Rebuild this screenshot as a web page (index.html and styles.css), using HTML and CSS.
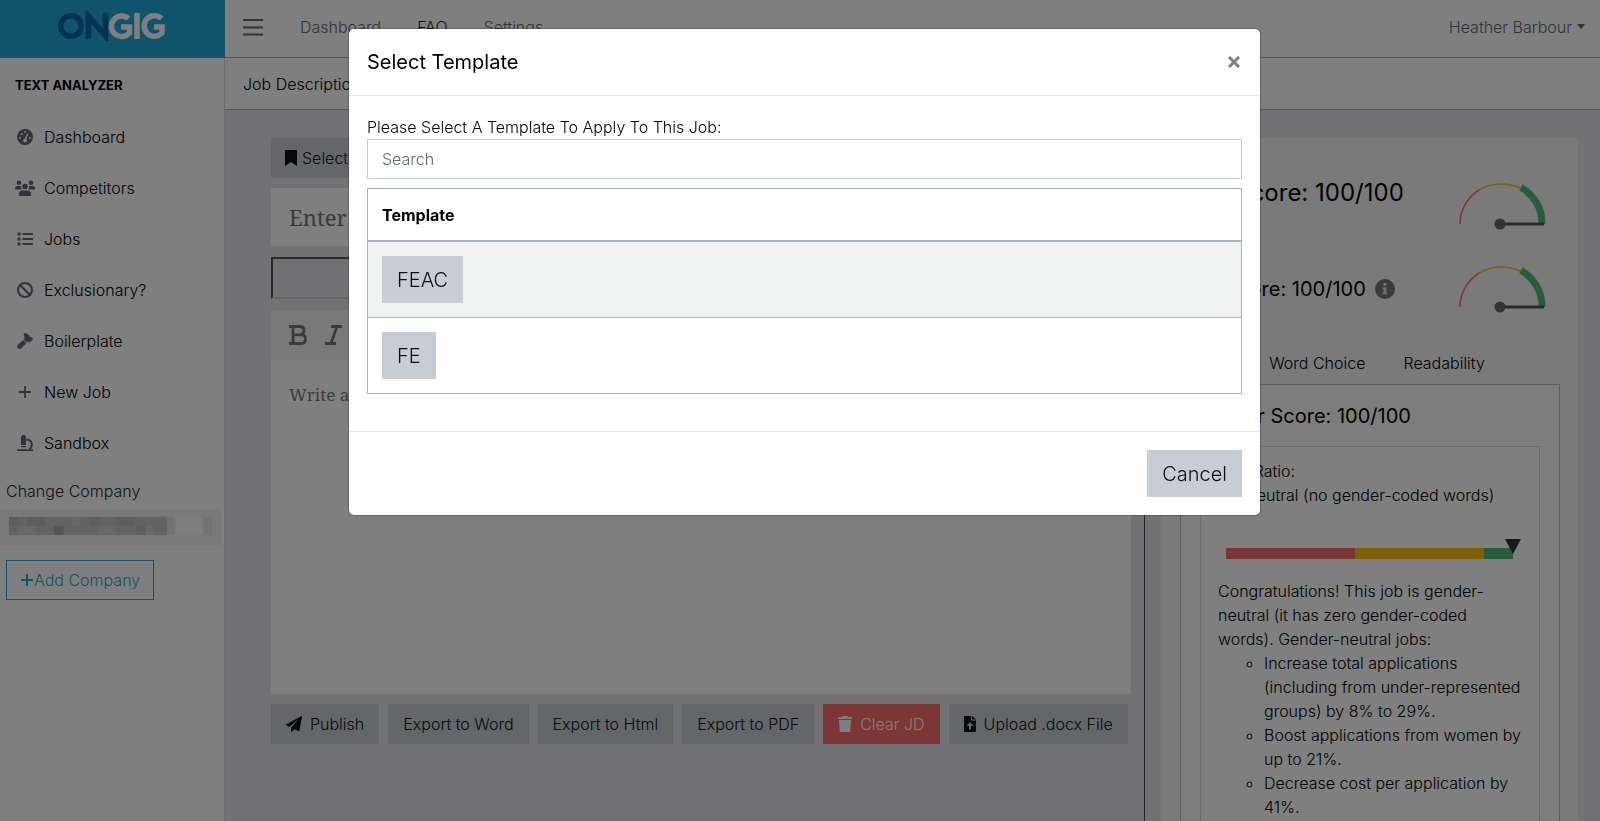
FILE: index.html
```html
<!DOCTYPE html>
<html lang="en">
<head>
<meta charset="utf-8">
<title>Ongig Text Analyzer</title>
<link rel="stylesheet" href="styles.css">
</head>
<body>
<div class="app">
  <aside class="sidebar">
    <div class="brand">
      <svg class="logo" width="108" height="30" viewBox="0 0 108 30" role="img" aria-label="Ongig">
        <g fill="none" stroke-width="5.5">
          <g stroke="#0064a8"><circle cx="13" cy="15" r="10.3"/><path d="M30.500 28V5L47.500 25V2"/></g>
          <g stroke="#fff"><path d="M70.500 7.500A10.300 10.300 0 1 0 71.500 22V16H63"/><path d="M79 2V28"/><path d="M103.500 7.500A10.300 10.300 0 1 0 104 22V16H96"/></g>
        </g>
      </svg>
    </div>
    <h2 class="side-title">TEXT ANALYZER</h2>
    <nav class="side-nav">
      <a href="#"><svg viewBox="0 0 16 16"><circle cx="8" cy="8" r="8"/><g fill="#fff"><circle cx="3.200" cy="9" r="1"/><circle cx="4.600" cy="5" r="1"/><circle cx="8" cy="3" r="1"/><circle cx="12.800" cy="9" r="1"/><circle cx="8" cy="11.500" r="1.900"/></g><path d="M8 11.500L10.700 4.500" stroke="#fff" stroke-width="1.300"/></svg>Dashboard</a>
      <a href="#"><svg class="wide" viewBox="0 0 20 16"><circle cx="4" cy="2.800" r="2.300"/><circle cx="16" cy="2.800" r="2.300"/><circle cx="10" cy="6.500" r="2.800"/><path d="M0 9.500V8.500Q0 6 2.500 6H5.500L6 6.300Q5.500 8.200 6.800 9.500ZM20 9.500V8.500Q20 6 17.500 6H14.500L14 6.300Q14.500 8.200 13.200 9.500ZM4 16V14Q4 10.500 7.500 10.500H12.500Q16 10.500 16 14V16Z"/></svg>Competitors</a>
      <a href="#"><svg viewBox="0 0 16 16"><path d="M.5 1.500h3v3h-3zM.5 6.500h3v3h-3zM.5 11.500h3v3h-3zM5.500 2h10.500v2H5.500zM5.500 7h10.500v2H5.500zM5.500 12h10.500v2H5.500z"/></svg>Jobs</a>
      <a href="#"><svg viewBox="0 0 16 16"><g fill="none" stroke="#5c6873" stroke-width="2"><circle cx="8" cy="8" r="7"/><path d="M3 3L13 13"/></g></svg>Exclusionary?</a>
      <a href="#"><svg viewBox="0 0 16 16"><path d="M6.500 .5L8.500 0L12.500 2.500L13 4.300L14.300 4L16 6L12.800 9.800L11 8.300L9.800 9.800L6.400 6.600L7.800 5.200ZM6 7.200L9.200 10.200L4 15.500Q2 16.600.7 15.300Q-.5 14 .6 12Z"/></svg>Boilerplate</a>
      <a href="#"><svg viewBox="0 0 16 16"><path d="M7.100 2h1.800v5.100H14v1.800H8.900V14H7.100V8.900H2V7.100h5.100z"/></svg>New Job</a>
      <a href="#"><svg viewBox="0 0 16 16"><path d="M5 1V0h3v1h1v8.500Q9 10 8.500 10H4.500Q4 10 4 9.500V1ZM4 11h5v1.300H4zM0 14.300h16V16H0z"/><path d="M9.500 4.500Q14.800 5 14.800 9.800Q14.800 13 12 14.800" fill="none" stroke="#5c6873" stroke-width="1.900"/></svg>Sandbox</a>
    </nav>
    <p class="side-label">Change Company</p>
    <svg class="mosaic" viewBox="0 0 225 42" preserveAspectRatio="none" role="img" aria-label="Company name hidden">
      <path fill="#f3f3f3" d="M0 0H222V36H0Z"/><path fill="#c6c6c6" d="M9 8H173V26H9Z"/>
      <path fill="#bababa" d="M9 8h9v9H9zM27 8h18v9H27zM90 8h9v9h-9zM117 8h18v9h-18zM137 17h9v9h-9z"/>
      <path fill="#a8a8a8" d="M54 17h10v9H54z"/><path fill="#d0d0d0" d="M72 8h9v9h-9zM99 17h18v9H99zM146 17h9v9h-9zM18 17h18v9H18z"/>
      <path fill="#e6e6e6" d="M168 8h8v18h-8zM204 8h9v18h-9z"/><path fill="#fafafa" d="M176 8h28v18h-28z"/><path fill="#fff" d="M0 36h218v6H0z"/>
    </svg>
    <button class="add-btn" type="button"><svg width="14" height="14" viewBox="0 0 14 14"><path d="M6 1h2v5h5v2H8v5H6V8H1V6h5z"/></svg>Add Company</button>
  </aside>

  <div class="main">
    <header class="topbar">
      <button class="burger" type="button" aria-label="Toggle menu"><svg width="22" height="18" viewBox="0 0 22 18"><path d="M1 2h20M1 9.500h20M1 16.500h20" stroke="#5c6873" stroke-width="2"/></svg></button>
      <nav class="top-nav"><a href="#">Dashboard</a><a href="#" class="active">FAQ</a><a href="#">Settings</a></nav>
      <button class="user" type="button">Heather Barbour<span class="caret"></span></button>
    </header>
    <div class="crumb">Job Description</div>
    <div class="content">
      <section class="editor">
        <div><button class="btn tight" type="button"><svg width="12" height="16" viewBox="0 0 12 16"><path d="M0 0H12V16L6 12L0 16Z"/></svg>Select Template</button></div>
        <input class="job-title" type="text" placeholder="Enter Title" aria-label="Job title">
        <div class="drop"></div>
        <div class="paper">
          <div class="tools">
            <button type="button" aria-label="Bold"><svg width="18" height="20" viewBox="0 0 18 20"><path d="M0 1.500H11Q15 1.500 15 5.500T11 9.800H4M4 1.500V18.500M0 18.500H12Q16.500 18.500 16.500 14T12 9.800"/></svg></button>
            <button type="button" aria-label="Italic"><svg width="18" height="20" viewBox="0 0 18 20"><path d="M6 1.500H17M0 18.500H11M12 1.500L6 18.500"/></svg></button>
          </div>
          <textarea class="doc" placeholder="Write a job description" aria-label="Job description"></textarea>
        </div>
        <div class="actions">
          <button class="btn" type="button"><svg width="16" height="16" viewBox="0 0 16 16"><path d="M15.500 0Q16 0 16 .8L13.500 14.500Q13.200 15.300 12.300 15L8.300 13.200L6.200 15.700Q5 16.300 5 15V11.800L12.500 3L3.500 10.800L.5 9.500Q-.5 8.800.5 8.200Z"/></svg>Publish</button>
          <button class="btn" type="button">Export to Word</button>
          <button class="btn" type="button">Export to Html</button>
          <button class="btn" type="button">Export to PDF</button>
          <button class="btn danger" type="button"><svg width="14" height="16" viewBox="0 0 14 16"><path d="M4.500 0h5l.7 1H14v2H0V1h3.800zM1 4h12l-.7 11Q12.200 16 11.200 16H2.800Q1.800 16 1.700 15z"/></svg>Clear JD</button>
          <button class="btn" type="button"><svg width="12" height="16" viewBox="0 0 12 16"><path fill-rule="evenodd" d="M1 0H7V4.500H12V15Q12 16 11 16H1Q0 16 0 15V1Q0 0 1 0ZM8 0L12 3.500H8ZM6 6L2.500 10H5V13.500H7V10H9.500Z"/></svg>Upload .docx File</button>
        </div>
      </section>
      <aside class="scores">
        <div class="score-row big"><h3>Text Score: 100/100</h3>
          <svg width="90" height="50" viewBox="0 0 90 50"><g fill="none"><path d="M2 43A43 41 0 0 1 21 9" stroke="#f86c6b" stroke-width="1.500"/><path d="M21 9A43 41 0 0 1 64 8" stroke="#ffc107" stroke-width="1.500"/><path d="M63 6.500A41 41 0 0 1 84 43" stroke="#4dbd74" stroke-width="7"/><path d="M42 43H86" stroke="#555" stroke-width="3"/></g><circle cx="42" cy="43" r="5.500" fill="#666"/></svg></div>
        <div class="score-row"><h4>Bias Score: 100/100 <svg class="info" width="20" height="20" viewBox="0 0 20 20"><circle cx="10" cy="10" r="10" fill="#777"/><path d="M8.500 4h3v3h-3zM7.500 8.200h4v5.300h1v1.800h-5v-1.800h1V10h-1z" fill="#ddd"/></svg></h4>
          <svg width="90" height="50" viewBox="0 0 90 50"><g fill="none"><path d="M2 43A43 41 0 0 1 21 9" stroke="#f86c6b" stroke-width="1.500"/><path d="M21 9A43 41 0 0 1 64 8" stroke="#ffc107" stroke-width="1.500"/><path d="M63 6.500A41 41 0 0 1 84 43" stroke="#4dbd74" stroke-width="7"/><path d="M42 43H86" stroke="#555" stroke-width="3"/></g><circle cx="42" cy="43" r="5.500" fill="#666"/></svg></div>
        <nav class="tabs"><a href="#">Bias</a><a href="#">Word Choice</a><a href="#">Readability</a></nav>
        <div class="tab-pane">
          <h4>Gender Score: 100/100</h4>
          <div class="detail">
            <p>Bias Ratio:<br>It's Neutral (no gender-coded words)</p>
            <div class="meter"><span class="low"></span><span class="mid"></span><span class="high"></span><i class="marker"></i></div>
            <p>Congratulations! This job is gender-neutral (it has zero gender-coded words). Gender-neutral jobs:</p>
            <ul><li>Increase total applications (including from under-represented groups) by 8% to 29%.</li><li>Boost applications from women by up to 21%.</li><li>Decrease cost per application by 41%.</li></ul>
          </div>
        </div>
      </aside>
    </div>
  </div>
</div>

<div class="backdrop">
  <div class="modal" role="dialog" aria-modal="true" aria-labelledby="modal-title">
    <div class="modal-head"><h1 id="modal-title">Select Template</h1><button class="close" type="button" aria-label="Close"><svg width="12" height="12" viewBox="0 0 12 12"><path d="M1 1L11 11M11 1L1 11" stroke="#7f7f7f" stroke-width="3"/></svg></button></div>
    <div class="modal-body">
      <label for="search">Please Select A Template To Apply To This Job:</label>
      <input id="search" type="text" placeholder="Search">
      <table>
        <thead><tr><th>Template</th></tr></thead>
        <tbody><tr><td><button class="btn-lg" type="button">FEAC</button></td></tr><tr><td><button class="btn-lg" type="button">FE</button></td></tr></tbody>
      </table>
    </div>
    <div class="modal-foot"><button class="btn-lg" type="button">Cancel</button></div>
  </div>
</div>
</body>
</html>
```
FILE: styles.css
```css
* { box-sizing: border-box; }
body { margin: 0; font: 300 16px/24px Inter, "Liberation Sans", sans-serif; color: #000; height: 100vh; overflow: hidden; }
h1, h2, h3, h4, p, ul { margin: 0; }
a { color: inherit; text-decoration: none; }
button, input, textarea { font: inherit; color: inherit; }
button { cursor: pointer; }
svg { flex: none; }
.app { display: flex; height: 100vh; overflow: hidden; background: #e4e5e9; }

.sidebar { flex: 0 0 225px; background: #fff; border-right: 1px solid #d5d8dd; }
.brand { height: 58px; margin-right: -1px; padding: 0 2px 6px 0; background: #20a8d8; display: flex; align-items: center; justify-content: center; }
.side-title { padding: 15px; font-size: 13px; line-height: 24px; font-weight: 700; }
.side-nav a { display: flex; align-items: center; gap: 11px; height: 51px; padding-left: 17px; }
.side-nav { margin-top: -1px; }
.side-nav svg { width: 16px; height: 16px; fill: #5c6873; }
.side-nav svg.wide { width: 20px; margin: 0 -2px; }
.side-label { padding: 11px 6px 6px; color: #23282c; }
.mosaic { display: block; width: 100%; height: 42px; }
.add-btn { display: flex; align-items: center; margin: 9px 6px; height: 40px; padding: 0 13px; border: 1px solid #20a8d8; background: none; color: #20a8d8; }
.add-btn svg { fill: #20a8d8; }

.main { flex: 1; min-width: 0; display: flex; flex-direction: column; }
.topbar { flex: none; height: 58px; background: #fff; border-bottom: 1px solid #a9b2b8; display: flex; align-items: center; color: #5c6873; padding: 0 15px 4px 17px; }
.burger, .user { border: 0; background: none; padding: 0; display: flex; align-items: center; }
.top-nav { display: flex; gap: 36px; margin-left: 36px; flex: 1; }
.top-nav .active { color: #23282c; }
.caret { border: 4px solid transparent; border-top: 5px solid; border-bottom: 0; margin-left: 5px; }
.crumb { flex: none; height: 52px; padding: 14px 18px; background: #fff; border-bottom: 1px solid #a9b2b8; }
.content { flex: 1; min-height: 0; display: flex; padding: 28px 22px 0 46px; }
.editor { flex: 1; min-width: 0; padding-right: 13px; border-right: 1px solid #444; margin-top: -28px; padding-top: 28px; }
.btn { display: inline-flex; align-items: center; gap: 8px; height: 40px; padding: 0 15px; border: 0; background: #c8ced3; color: #0b0e14; }
.btn svg { fill: currentColor; }
.tight { gap: 5px; padding: 0 14px; }
.danger { background: #f86c6b; color: #fff; }
.job-title { display: block; width: 100%; height: 58px; margin-top: 10px; padding: 0 18px; border: 0; background: #fff; font: 22px "Noto Serif", "Liberation Serif", serif; }
.job-title::placeholder, .doc::placeholder { color: #777; opacity: 1; }
.drop { height: 42px; margin: 11px 0; border: 2px solid #555; border-right-color: #ccc; border-bottom-color: #ccc; }
.paper { background: #fff; }
.tools { display: flex; gap: 18px; height: 50px; padding: 0 18px; align-items: center; background: #f3f3f3; }
.tools button { border: 0; padding: 0; background: none; display: flex; }
.tools path { fill: none; stroke: #777; stroke-width: 2.8px; }
.doc { display: block; width: 100%; height: 334px; padding: 22px 18px; border: 0; background: none; resize: none; font: 17px/26px "Noto Serif", "Liberation Serif", serif; }
.actions { display: flex; gap: 9px; padding-top: 10px; white-space: nowrap; }

.scores { flex: 0 0 417px; margin-left: 16px; background: #f4f4f5; padding: 0 18px 0 19px; }
.score-row { display: flex; justify-content: space-between; align-items: center; height: 83px; padding-right: 12px; }
.score-row h3 { font-size: 24px; font-weight: 400; }
h4 { font-size: 20px; font-weight: 400; }
.score-row.big { height: 88px; padding-top: 22px; align-items: flex-start; margin-top: 21px; }
.info { vertical-align: -3px; margin-left: 4px; }
.tabs { display: flex; gap: 38px; height: 54px; padding: 21px 0 0 20px; }
.tab-pane { border: 1px solid #b5b9be; padding: 19px 19px 19px 14px; background: #fafafa; }
.detail { margin: 18px 0 0 5px; padding: 12px 14px 12px 17px; border: 1px solid #d5d8dd; background: #fff; }
.meter { display: flex; height: 11px; margin: 41px 12px 20px 8px; position: relative; }
.low, .mid { flex: 9; background: #f86c6b; }
.mid { background: #ffc107; }
.high { flex: 2; background: #4dbd74; }
.marker { position: absolute; right: -8px; top: -9px; border: 8px solid transparent; border-top: 15px solid #333; border-bottom: 0; }
.detail ul { padding-left: 46px; list-style: circle; }

.backdrop { position: fixed; inset: 0; padding: 29px 0 0 9px; background: rgba(0, 0, 0, .5); }
.modal { width: 90%; max-width: 911px; margin: 0 auto; background: #fff; border-radius: 5px; box-shadow: 0 0 0 1px rgba(0, 0, 0, .2); }
.modal-head { display: flex; justify-content: space-between; align-items: center; height: 67px; padding: 0 20px 0 18px; border-bottom: 1px solid #e4e7ea; }
.modal-head h1 { font-size: 20px; font-weight: 400; }
.close { border: 0; background: none; padding: 0; display: flex; }
.modal-body { padding: 19px 18px 37px; }
.modal-body label { display: block; }
.modal-body input { display: block; width: 100%; height: 40px; padding: 0 14px; border: 1px solid #c2cfd6; background: #fff; }
.modal-body input::placeholder { color: #5c6873; opacity: 1; }
table { width: 100%; margin-top: 9px; border-collapse: collapse; border: 1px solid #a4b7c1; }
th { text-align: left; padding: 14px 14px 13px; border-bottom: 2px solid #a4b7c1; font-weight: 700; }
td { padding: 14px; border-top: 1px solid #a4b7c1; }
tbody tr:first-child { background: #f0f1f1; }
.btn-lg { display: block; height: 47px; padding: 0 15px; border: 0; background: #c8ccd5; color: #0b0e14; font-size: 20px; }
.modal-foot { display: flex; justify-content: flex-end; padding: 18px; border-top: 1px solid #e4e7ea; }
```
